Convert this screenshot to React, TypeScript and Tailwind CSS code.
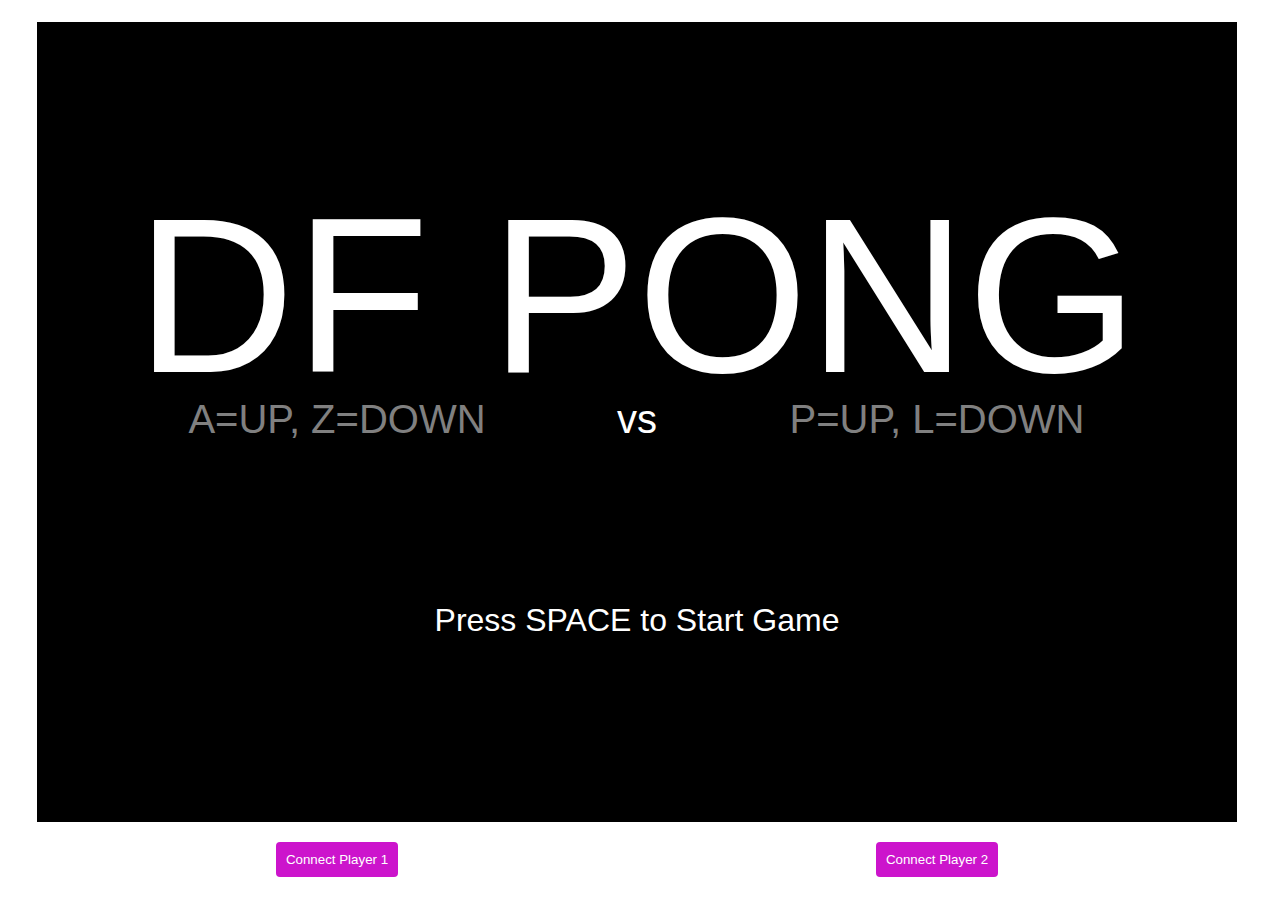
import React from 'react';

const PlayerButton: React.FC<{ label: string }> = ({ label }) => (
  <div className="flex justify-center">
    <button className="rounded-[4px] bg-[#cc14cc] px-[10px] py-[10px] text-[13.333px] leading-[15px] text-white">
      {label}
    </button>
  </div>
);

const App: React.FC = () => {
  return (
    <div className="min-h-screen bg-white pl-[37px] pt-[22px] font-['Liberation_Sans',Arial,sans-serif]">
      <div className="w-[1200px]">
        {/* Game board */}
        <div className="flex h-[800px] w-[1200px] flex-col items-center bg-black pt-[174px]">
          <h1 className="h-[200px] whitespace-nowrap text-[220px] leading-[200px] font-normal text-white">
            DF PONG
          </h1>
          <div className="mt-[3px] grid w-full grid-cols-[400px_200px_400px] px-[100px] text-[40px] leading-[40px]">
            <div className="text-center text-[#808080]">A=UP, Z=DOWN</div>
            <div className="text-center text-white">vs</div>
            <div className="text-center text-[#808080]">P=UP, L=DOWN</div>
          </div>
          <p className="mt-[165px] text-[32px] leading-[32px] text-white">Press SPACE to Start Game</p>
        </div>

        {/* Controls */}
        <div className="mt-[20px] grid grid-cols-2">
          <PlayerButton label="Connect Player 1" />
          <PlayerButton label="Connect Player 2" />
        </div>
      </div>
    </div>
  );
};

export default App;
